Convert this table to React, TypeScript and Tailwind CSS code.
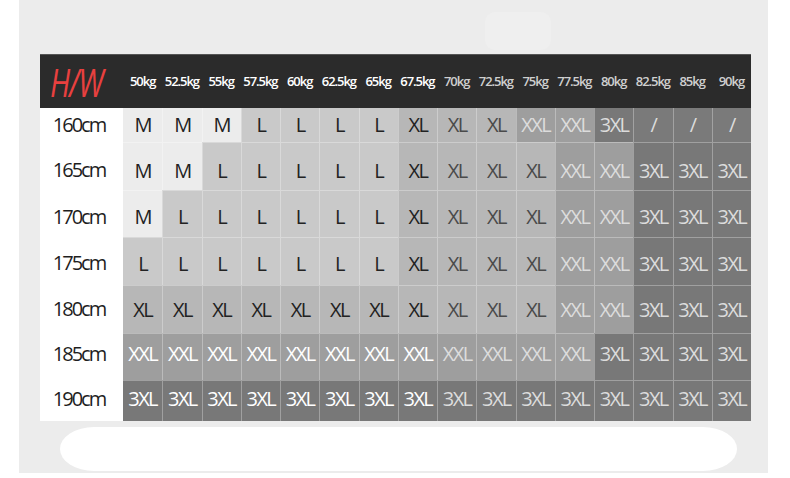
import React from "react";

const cols = ["50kg","52.5kg","55kg","57.5kg","60kg","62.5kg","65kg","67.5kg","70kg","72.5kg","75kg","77.5kg","80kg","82.5kg","85kg","90kg"];

const rep = (s: string, n: number) => Array.from({ length: n }, () => s);

const rows: { label: string; cells: string[]; shift: string }[] = [
  { label: "160cm", cells: ["M","M","M","L","L","L","L","XL","XL","XL","XXL","XXL","3XL","/","/","/"], shift: "translate-y-[0px]" },
  { label: "165cm", cells: ["M","M","L","L","L","L","L","XL","XL","XL","XL","XXL","XXL","3XL","3XL","3XL"], shift: "translate-y-[4px]" },
  { label: "170cm", cells: ["M","L","L","L","L","L","L","XL","XL","XL","XL","XXL","XXL","3XL","3XL","3XL"], shift: "translate-y-[3px]" },
  { label: "175cm", cells: ["L","L","L","L","L","L","L","XL","XL","XL","XL","XXL","XXL","3XL","3XL","3XL"], shift: "translate-y-[2px]" },
  { label: "180cm", cells: [...rep("XL", 11), "XXL","XXL","3XL","3XL","3XL"], shift: "translate-y-[0px]" },
  { label: "185cm", cells: [...rep("XXL", 12), "3XL","3XL","3XL","3XL"], shift: "-translate-y-[3px]" },
  { label: "190cm", cells: rep("3XL", 16), shift: "-translate-y-[2px]" },
];

const bgFor = (s: string) => {
  switch (s) {
    case "M": return "bg-[#ececec]";
    case "L": return "bg-[#c9c9c9]";
    case "XL": return "bg-[#b7b7b7]";
    case "XXL": return "bg-[#9e9e9e]";
    case "3XL": return "bg-[#787878]";
    default: return "bg-[#7a7a7a]";
  }
};

const textFor = (s: string, ci: number) => {
  const dark = s === "M" || s === "L" || s === "XL";
  if (ci < 8) return dark ? "text-[#222222]" : "text-white";
  return dark ? "text-[#4a4a4a]" : "text-[#dcdcdc]";
};

export default function App() {
  return (
    <div className="w-[790px] h-[478px] bg-white overflow-hidden" style={{ fontFamily: '"Open Sans", "Noto Sans", sans-serif' }}>
      <div className="relative ml-[19px] w-[749px] h-[473px] bg-[#ececec] pt-[54px] pl-[21px]">
        <div className="absolute left-[466px] top-[12px] w-[66px] h-[38px] rounded-[10px] bg-[#efefef]" />
        <div className="grid w-[711px] grid-cols-[83px_repeat(16,minmax(0,1fr))] grid-rows-[54px_34px_48px_47px_48px_48px_47px_41px]">
          <div className="bg-[#2b2b2b] border-t border-[#555] flex items-center pl-[10px]">
            <span className="text-[#e8403f] italic text-[38px] leading-none font-normal tracking-[-0.04em] origin-left scale-x-[0.78] whitespace-nowrap">H/W</span>
          </div>
          {cols.map((c, i) => (
            <div key={c} className="bg-[#2b2b2b] border-t border-[#555] flex items-center justify-center">
              <span className={`text-[13px] font-semibold tracking-[-0.08em] whitespace-nowrap ${i < 8 ? "text-white" : "text-[#cfcfcf]"}`}>{c}</span>
            </div>
          ))}
          {rows.map((r, ri) => (
            <React.Fragment key={r.label}>
              <div className="bg-white flex items-center justify-center pr-[5px]">
                <span className={`text-[20px] text-[#1e1e1e] tracking-[-0.1em] leading-none ${r.shift}`}>{r.label}</span>
              </div>
              {r.cells.map((s, ci) => (
                <div
                  key={ci}
                  className={`flex items-center justify-center border-white/30 ${bgFor(s)} ${ci > 0 ? "border-l" : ""} ${ri > 0 ? "border-t" : ""}`}
                >
                  <span className={`text-[20px] leading-none tracking-[-0.08em] whitespace-nowrap ${textFor(s, ci)} ${r.shift}`}>{s}</span>
                </div>
              ))}
            </React.Fragment>
          ))}
        </div>
        <div className="mt-[6px] ml-[20px] w-[677px] h-[44px] bg-white rounded-[34px/22px]" />
      </div>
    </div>
  );
}
